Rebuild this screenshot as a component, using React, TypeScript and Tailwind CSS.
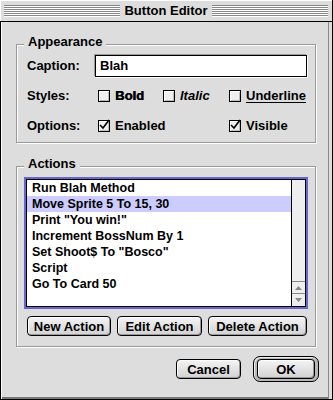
const actions = [
  'Run Blah Method',
  'Move Sprite 5 To 15, 30',
  'Print "You win!"',
  'Increment BossNum By 1',
  'Set Shoot$ To "Bosco"',
  'Script',
  'Go To Card 50',
];

function Check({ checked }: { checked?: boolean }) {
  return (
    <span className="relative flex h-[12px] w-[12px] shrink-0 items-center justify-center border border-black bg-[#eeeeee] shadow-[inset_1px_1px_0_#fff,inset_-1px_-1px_0_#bbb]">
      {checked && (
        <svg width="12" height="12" viewBox="0 0 12 12" className="absolute -left-px -top-[2px]">
          <path d="M2 6 L5 9 L11 1" fill="none" stroke="#000" strokeWidth="1.6" />
        </svg>
      )}
    </span>
  );
}

function PushButton({ label, width }: { label: string; width: string }) {
  return (
    <button
      className={`flex h-[20px] items-center justify-center rounded-[4px] border border-black bg-gradient-to-b from-[#f4f4f4] to-[#d2d2d2] text-[13px] font-bold leading-none text-black shadow-[inset_1px_1px_0_#fff,inset_-1px_-1px_0_#999] ${width}`}
    >
      {label}
    </button>
  );
}

function GroupBox({ title, className, children }: { title: string; className: string; children: React.ReactNode }) {
  return (
    <div className={`relative border border-[#999] shadow-[1px_1px_0_#fff,inset_1px_1px_0_#fff] ${className}`}>
      <span className="absolute -top-[10px] left-[7px] bg-[#dddddd] px-[4px] text-[13px] font-bold leading-[14px]">{title}</span>
      {children}
    </div>
  );
}

export default function App() {
  return (
    <div className="flex h-[400px] w-[333px] flex-col bg-[#dddddd] font-['Liberation_Sans',Arial,sans-serif] text-black">
      {/* title bar */}
      <div className="flex h-[21px] shrink-0 items-center border-r border-black px-[4px] shadow-[inset_1px_1px_0_#fff]">
        <div className="h-[12px] flex-1 bg-[repeating-linear-gradient(to_bottom,#888_0px,#888_1px,#ffffff_1px,#ffffff_2px)]" />
        <span className="px-[4px] text-[13px] font-bold leading-none">Button Editor</span>
        <div className="h-[12px] flex-1 bg-[repeating-linear-gradient(to_bottom,#888_0px,#888_1px,#ffffff_1px,#ffffff_2px)]" />
      </div>
      <div className="h-px shrink-0 bg-black" />

      {/* body */}
      <div className="flex flex-1 flex-col border-x border-b border-black pl-[15px] pr-[16px] pt-[22px] shadow-[inset_1px_0_0_#fff,inset_-3px_0_0_#dddddd,inset_-4px_0_0_#888,inset_0_-2px_0_#777]">
        <GroupBox title="Appearance" className="pb-[5px] pl-[10px] pr-[8px] pt-[10px]">
          <div className="flex flex-col gap-[8px] text-[13px] font-bold">
            <div className="flex h-[22px] items-center">
              <span className="w-[68px]">Caption:</span>
              <div className="flex h-[22px] flex-1 items-center border border-black bg-white pl-[4px] shadow-[-1px_-1px_0_#999,1px_1px_0_#fff]">
                Blah
              </div>
            </div>
            <div className="flex h-[22px] items-center">
              <span className="w-[68px]">Styles:</span>
              <div className="ml-[3px] flex w-[65px] items-center gap-[5px]">
                <Check />
                <span className="[text-shadow:0.6px_0_0_#000]">Bold</span>
              </div>
              <div className="flex w-[66px] items-center gap-[5px]">
                <Check />
                <span className="italic">Italic</span>
              </div>
              <div className="flex items-center gap-[5px]">
                <Check />
                <span className="underline underline-offset-2">Underline</span>
              </div>
            </div>
            <div className="flex h-[22px] items-center">
              <span className="w-[68px]">Options:</span>
              <div className="ml-[3px] flex w-[131px] items-center gap-[5px]">
                <Check checked />
                <span>Enabled</span>
              </div>
              <div className="flex items-center gap-[5px]">
                <Check checked />
                <span>Visible</span>
              </div>
            </div>
          </div>
        </GroupBox>

        <GroupBox title="Actions" className="mt-[23px] pb-[10px] pl-[7px] pr-[7px] pt-[10px]">
          <div className="flex h-[132px] border-2 border-[#6666cc]">
            <div className="flex flex-1 border border-black bg-white">
              <div className="flex flex-1 flex-col text-[12.5px] font-bold">
                {actions.map((a, i) => (
                  <div key={a} className={`flex h-[16px] items-center pl-[5px] ${i === 1 ? 'bg-[#ccccff]' : ''}`}>
                    {a}
                  </div>
                ))}
              </div>
              <div className="flex w-[14px] flex-col justify-end border-l border-black bg-[#eeeeee]">
                <div className="flex h-[12px] items-center justify-center border-t border-[#888]">
                  <svg width="7" height="4" viewBox="0 0 7 4">
                    <path d="M3.5 0 L7 4 L0 4 Z" fill="#888" />
                  </svg>
                </div>
                <div className="flex h-[13px] items-center justify-center border-t border-[#888]">
                  <svg width="7" height="4" viewBox="0 0 7 4">
                    <path d="M0 0 L7 0 L3.5 4 Z" fill="#888" />
                  </svg>
                </div>
              </div>
            </div>
          </div>
          <div className="mt-[7px] flex gap-[6px] pl-[3px]">
            <PushButton label="New Action" width="w-[84px]" />
            <PushButton label="Edit Action" width="w-[85px]" />
            <PushButton label="Delete Action" width="w-[99px]" />
          </div>
        </GroupBox>

        <div className="-mr-[3px] mt-[9px] flex items-center justify-end gap-[12px]">
          <PushButton label="Cancel" width="w-[65px]" />
          <div className="rounded-[7px] border border-black bg-[#b8b8b8] px-[3px] py-[2px] shadow-[inset_1px_1px_0_#eee]">
            <PushButton label="OK" width="w-[58px]" />
          </div>
        </div>
      </div>
    </div>
  );
}
